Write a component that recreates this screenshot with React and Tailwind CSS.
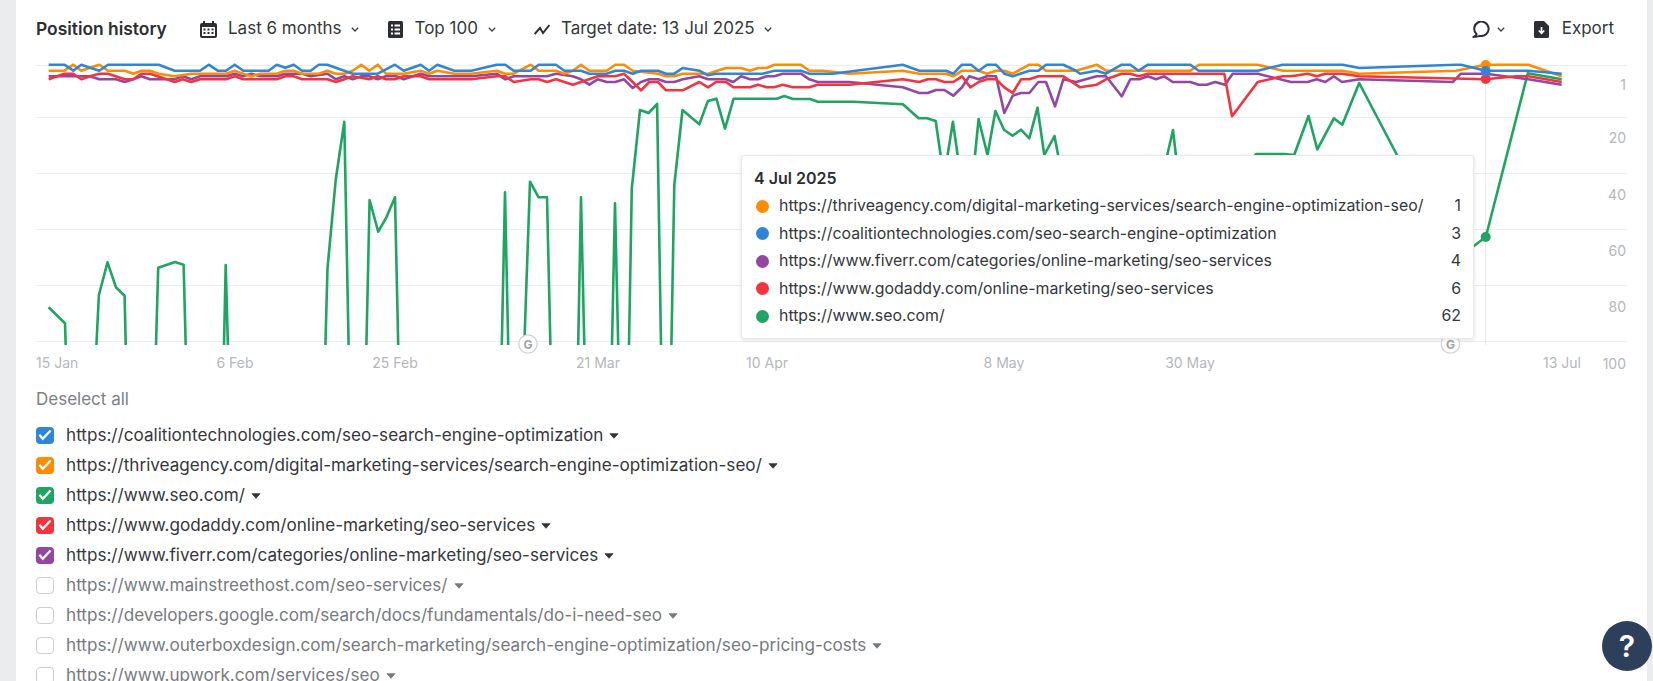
import React from 'react';

const BLUE = '#2f86d9';
const ORANGE = '#ff8b00';
const GREEN = '#1fa463';
const RED = '#f5333f';
const PURPLE = '#9347a3';

// traced from the picture in 3x strips, offset by strip start
const strip = (x0, s) =>
  s.split(' ').map((p) => {
    const [a, b] = p.split(',');
    return `${(x0 + a / 3).toFixed(1)},${(58 + b / 3).toFixed(1)}`;
  }).join(' ');

const topLines = [
  {
    color: PURPLE,
    points: [
      strip(36, '38,55 162,55 190,64 240,64 266,72 292,64 316,55 342,64 416,64 440,55 466,64 492,55 570,55 596,47 622,55 646,47 672,55 722,55 748,47 798,47 824,55 874,47 900,64 925,55 950,64 976,55 1000,55 1025,64 1050,55 1080,55 1103,64 1154,47 1179,55 1306,55 1382,47 1408,64 1433,55 1533,55 1560,47'),
      strip(556, '0,47 50,55 75,64 100,80 125,64 152,72 178,72 204,64 230,90 255,72 280,64 306,64 330,72 355,72 380,64 430,55 456,64 510,64 532,72 555,55 582,64 606,64 632,55 655,55 680,47 735,47 760,64 785,72 880,72 1040,88 1090,105 1115,105 1140,96 1165,96 1192,113 1218,88 1240,55 1268,64 1293,55 1320,55 1345,165 1370,113 1395,105 1420,105 1447,72 1470,72 1497,145 1522,64 1560,72'),
      strip(1076, '0,72 62,55 90,55 137,115 163,64 190,64 215,55 240,64 265,55 290,72 343,72 368,80 392,80 417,72 447,80 470,47 545,47 645,72 695,72 722,64 748,72 773,55 798,72 850,64 1130,72 1155,47 1229,47 1357,64 1457,80'),
    ],
  },
  {
    color: ORANGE,
    points: [
      strip(36, '38,38 85,38 112,20 136,38 162,29 190,20 216,38 266,38 292,47 316,38 342,38 368,47 416,55 466,47 570,47 596,38 622,47 646,55 672,47 722,47 748,38 773,38 798,47 848,47 874,38 900,47 925,47 950,38 976,20 1000,38 1025,20 1050,47 1103,47 1154,38 1179,47 1204,38 1255,47 1306,47 1382,38 1408,47 1433,47 1484,20 1508,38 1560,38'),
      strip(556, '0,38 25,47 50,38 75,20 100,38 152,38 178,20 204,20 230,38 306,47 330,55 355,55 380,47 456,47 510,30 555,30 582,38 606,30 632,30 655,20 735,20 760,38 800,38 880,47 1040,38 1090,47 1170,47 1192,55 1218,38 1268,38 1293,47 1320,38 1345,38 1370,47 1420,20 1447,20 1470,38 1560,38'),
      strip(1076, '0,38 62,20 90,38 343,38 368,20 545,20 620,38 800,38 850,47 1140,38 1229,20 1357,20 1457,55'),
    ],
  },
  {
    color: BLUE,
    points: [
      strip(36, '38,20 85,20 112,38 136,20 162,29 190,38 216,20 368,20 416,38 492,38 518,20 545,38 570,38 596,20 622,38 698,38 722,20 748,29 773,20 798,38 824,38 848,20 874,20 950,47 1025,47 1077,20 1103,38 1154,20 1179,38 1204,20 1255,38 1306,38 1382,20 1408,20 1433,38 1484,38 1508,20 1560,20'),
      strip(556, '0,20 25,38 75,38 100,47 152,47 178,38 204,38 230,47 255,38 306,38 330,47 355,47 380,30 430,38 456,52 480,47 620,47 655,38 735,38 760,47 830,47 1040,20 1090,38 1170,38 1192,47 1218,20 1245,20 1268,38 1293,20 1320,20 1345,47 1370,55 1420,38 1447,38 1470,20 1522,20 1560,38'),
      strip(1076, '0,38 12,47 62,38 90,47 137,20 163,20 188,38 216,20 343,20 368,38 545,38 620,20 800,20 850,30 1140,20 1155,20 1229,38 1357,38 1457,47'),
    ],
  },
  {
    color: RED,
    points: [
      strip(36, '38,64 85,47 112,47 136,64 162,55 190,47 216,47 266,64 292,64 316,47 342,47 392,64 416,72 440,64 466,72 492,64 570,64 596,55 622,64 722,64 748,55 773,55 798,64 874,64 900,72 925,64 950,55 1000,64 1025,55 1050,64 1077,64 1103,55 1154,55 1179,64 1306,64 1382,55 1408,55 1433,72 1484,64 1508,64 1533,72 1560,64'),
      strip(556, '0,64 50,80 75,72 125,55 178,55 204,47 230,72 255,97 280,72 306,72 330,97 380,97 430,72 456,88 480,72 510,72 532,88 582,88 606,80 632,88 655,88 680,80 710,88 760,88 785,80 880,80 1040,64 1090,72 1115,64 1140,64 1165,72 1192,72 1218,55 1243,88 1268,72 1293,64 1320,64 1345,88 1370,105 1395,64 1420,64 1447,55 1522,55 1560,80'),
      strip(1076, '0,80 12,88 62,80 90,64 137,47 163,47 188,55 216,47 445,47 468,175 545,72 620,55 645,55 695,47 722,55 748,47 798,47 850,55 1229,64 1320,55 1357,55 1457,72'),
    ],
  },
];

// seo.com drops out of the top 100 a lot, so it is drawn in pieces
const greenParts = [
  '48.6,307.3 65,323.3 65.7,345',
  '96.4,345 98.9,295 107.5,262.3 116,287.3 124.6,295.7 125.7,345',
  '156,345 158.2,267.7 175,262 183.6,264.7 185.7,345',
  '224,345 225.7,265 227.9,345',
  '325.4,345 327.5,268.3 335.7,180 344.3,121.7 348.6,345',
  '366.4,345 369.6,200 378.2,231.7 386.4,217.3 395,197.3 398.2,345',
  '501.8,345 505,192.3 508.2,345',
  '524.3,345 530,181.7 538.6,197.3 547,197.3 550.4,345',
  '578.2,345 581,197.3 584.3,345',
  '612,345 615,203.3 618.2,345',
  '629,345 631.8,188.3 640,110 648.6,113 657.1,104 661,345',
  '671.4,345 674.3,185 682.5,110 699.3,124.3 707.9,101 716.4,98.7 725,128.7 733.6,98.7 776.8,98.7 784.3,96 792.9,99 810,99 817.9,101.7 853.6,101.7 902.9,104.3 918.6,118.3 927,118.3 935.7,121 942,165 946,165 952.9,121.7 959,165 974,165 978.6,119 987.5,155 995.4,111 1004,129.7 1012.5,135.7 1021,129.7 1029.3,138.3 1037.5,107.7 1044.3,155 1054.5,136 1060,165 1165,165 1173,130 1177,165 1250,165 1256,154 1284,154 1294.2,155 1308.5,116 1317.3,149.3 1333.8,118.3 1342.3,124.7 1359.2,83 1397,155 1440,260 1473.8,246 1485.8,237 1527.8,73.3 1561.7,79.3',
];

const gridY = [65, 117, 173, 229, 285, 341];

const xLabels = [
  ['15 Jan', 36, 'start'],
  ['6 Feb', 235, 'middle'],
  ['25 Feb', 395, 'middle'],
  ['21 Mar', 598, 'middle'],
  ['10 Apr', 767, 'middle'],
  ['8 May', 1004, 'middle'],
  ['30 May', 1190, 'middle'],
  ['13 Jul', 1562, 'middle'],
];

const yLabels = [['1', 84], ['20', 137], ['40', 194], ['60', 250], ['80', 306], ['100', 363]];

const tooltipRows = [
  [ORANGE, 'https://thriveagency.com/digital-marketing-services/search-engine-optimization-seo/', 1],
  [BLUE, 'https://coalitiontechnologies.com/seo-search-engine-optimization', 3],
  [PURPLE, 'https://www.fiverr.com/categories/online-marketing/seo-services', 4],
  [RED, 'https://www.godaddy.com/online-marketing/seo-services', 6],
  [GREEN, 'https://www.seo.com/', 62],
];

const urls = [
  [BLUE, 'https://coalitiontechnologies.com/seo-search-engine-optimization'],
  [ORANGE, 'https://thriveagency.com/digital-marketing-services/search-engine-optimization-seo/'],
  [GREEN, 'https://www.seo.com/'],
  [RED, 'https://www.godaddy.com/online-marketing/seo-services'],
  [PURPLE, 'https://www.fiverr.com/categories/online-marketing/seo-services'],
  [null, 'https://www.mainstreethost.com/seo-services/'],
  [null, 'https://developers.google.com/search/docs/fundamentals/do-i-need-seo'],
  [null, 'https://www.outerboxdesign.com/search-marketing/search-engine-optimization/seo-pricing-costs'],
  [null, 'https://www.upwork.com/services/seo'],
];

function Chevron() {
  return (
    <svg width="8" height="5" viewBox="0 0 8 5" fill="none" className="shrink-0">
      <path d="M0.8 0.8 4 4 7.2 0.8" stroke="#3a3d42" strokeWidth="1.3" />
    </svg>
  );
}

function CalendarIcon() {
  return (
    <svg width="17" height="17" viewBox="0 0 17 17" className="shrink-0">
      <rect x="0" y="2" width="17" height="15" rx="2" fill="#2b2e33" />
      <rect x="3" y="0" width="2" height="4" fill="#2b2e33" />
      <rect x="12" y="0" width="2" height="4" fill="#2b2e33" />
      <rect x="2" y="6" width="13" height="9" fill="#fff" />
      <path d="M3.5 7.5h2v2h-2zM7.5 7.5h2v2h-2zM11.5 7.5h2v2h-2zM3.5 11h2v2h-2zM7.5 11h2v2h-2zM11.5 11h2v2h-2z" fill="#2b2e33" />
    </svg>
  );
}

function TableIcon() {
  return (
    <svg width="15" height="17" viewBox="0 0 15 17" className="shrink-0">
      <rect width="15" height="17" rx="1.5" fill="#2b2e33" />
      <path d="M3 3.5h2v2H3zM3 7.5h2v2H3zM3 11.5h2v2H3zM6.5 3.5H12v2H6.5zM6.5 7.5H12v2H6.5zM6.5 11.5H12v2H6.5z" fill="#fff" />
    </svg>
  );
}

function TrendIcon() {
  return (
    <svg width="16" height="11" viewBox="0 0 16 11" fill="none" className="shrink-0">
      <path d="M0.6 10 6 4 9 9 15.4 1" stroke="#2b2e33" strokeWidth="2" />
    </svg>
  );
}

function CommentIcon() {
  return (
    <svg width="18" height="17" viewBox="0 0 18 17" fill="none" className="shrink-0">
      <path d="M4.6 13.2A7.2 7.2 0 1 1 8 14.9Q4.8 15.9 1.4 16Q3.9 15 4.6 13.2Z" stroke="#2b2e33" strokeWidth="2" strokeLinejoin="round" />
    </svg>
  );
}

function ExportIcon() {
  return (
    <svg width="15" height="17" viewBox="0 0 15 17" className="shrink-0">
      <path d="M1.5 0H10L15 5V15.5A1.5 1.5 0 0 1 13.5 17H1.5A1.5 1.5 0 0 1 0 15.5V1.5A1.5 1.5 0 0 1 1.5 0Z" fill="#2b2e33" />
      <path d="M7.5 6V12M4.8 9.5 7.5 12.3 10.2 9.5" stroke="#fff" strokeWidth="1.7" fill="none" />
    </svg>
  );
}

function Caret({ muted }) {
  const c = muted ? '#767a80' : '#33363b';
  return (
    <svg width="10" height="6" viewBox="0 0 10 6" className="ml-1.5 mt-0.5 shrink-0">
      <path d="M1 0.7H9L5 5.3Z" fill={c} stroke={c} strokeWidth="0.8" strokeLinejoin="round" />
    </svg>
  );
}

function Checkbox({ color }) {
  if (!color) {
    return <span className="h-[17px] w-[18px] shrink-0 rounded-[4px] border border-[#cbcdd1] bg-white" />;
  }
  return (
    <span className="flex h-[17px] w-[18px] shrink-0 items-center justify-center rounded-[4px]" style={{ backgroundColor: color }}>
      <svg width="18" height="17" viewBox="0 0 18 17" fill="none">
        <path d="M3.4 7.8 6.8 11.8 14.6 3.4" stroke="#fff" strokeWidth="2.2" />
      </svg>
    </span>
  );
}

function GBadge({ x }) {
  return (
    <g>
      <circle cx={x} cy="344" r="9.2" fill="#fff" stroke="#d3d4d6" strokeWidth="1.3" />
      <text x={x} y="344.5" textAnchor="middle" dominantBaseline="central" className="fill-[#9fa2a6] text-[12px] font-bold">G</text>
    </g>
  );
}

function Chart() {
  return (
    <svg width="1591" height="316" viewBox="36 56 1591 316" className="block">
      {gridY.map((y) => (
        <line key={y} x1="36" x2="1627" y1={y + 0.5} y2={y + 0.5} stroke="#eceded" strokeWidth="1" />
      ))}
      <line x1="1485.5" x2="1485.5" y1="62" y2="345" stroke="#e9eaec" strokeWidth="1" />
      <g fill="none" strokeWidth="2.6" strokeLinejoin="round">
        {greenParts.map((p, i) => (
          <polyline key={i} points={p} stroke={GREEN} />
        ))}
        {topLines.map((l) => (
          <polyline key={l.color} points={l.points.join(' ')} stroke={l.color} />
        ))}
      </g>
      <GBadge x={527.9} />
      <GBadge x={1450.4} />
      <circle cx="1485.7" cy="65" r="5" fill={ORANGE} />
      <circle cx="1485.7" cy="79" r="5" fill={RED} />
      <circle cx="1485.7" cy="71" r="5" fill={BLUE} />
      <circle cx="1485.7" cy="237" r="5" fill={GREEN} />
      {xLabels.map(([t, x, anchor]) => (
        <text key={t} x={x} y="362" textAnchor={anchor} dominantBaseline="central" className="fill-[#b4b7bb] text-[14px]">{t}</text>
      ))}
      {yLabels.map(([t, y]) => (
        <text key={t} x="1626" y={y} textAnchor="end" dominantBaseline="central" className="fill-[#b4b7bb] text-[14px]">{t}</text>
      ))}
    </svg>
  );
}

function Tooltip() {
  return (
    <div className="absolute left-[705px] top-[98.5px] h-[184.5px] w-[733px] rounded-[3px] border border-[#e8e9ea] bg-white px-3 pt-[10.5px] text-[15.86px] text-[#34373c] shadow-[0_1px_4px_rgba(0,0,0,0.12)]">
      <div className="mb-[2.5px] h-[24px] text-[16px] font-semibold leading-[24px] text-[#2b2e33]">4 Jul 2025</div>
      {tooltipRows.map(([color, url, pos]) => (
        <div key={url} className="flex h-[27.5px] items-center">
          <span className="ml-[2px] mr-[10px] h-[13px] w-[13px] shrink-0 rounded-full" style={{ backgroundColor: color }} />
          <span className="flex-1">{url}</span>
          <span>{pos}</span>
        </div>
      ))}
    </div>
  );
}

export default function App() {
  return (
    <div className="relative h-[681px] overflow-hidden bg-[#ebecee] pl-4 pr-1.5 font-['Inter',sans-serif]">
      <div className="h-full bg-white px-5">
        <div className="flex h-14 items-center pt-[2px] text-[17px] text-[#34373c]">
          <h2 className="mr-[34px] w-[130px] whitespace-nowrap text-[17.4px] font-semibold text-[#2b2e33]">Position history</h2>
          <div className="mr-[29px] flex items-center">
            <CalendarIcon />
            <span className="ml-[11px] mr-[9px]">Last 6 months</span>
            <Chevron />
          </div>
          <div className="mr-[38px] flex items-center">
            <TableIcon />
            <span className="ml-[12px] mr-[10px]">Top 100</span>
            <Chevron />
          </div>
          <div className="flex items-center">
            <TrendIcon />
            <span className="ml-[11px] mr-[9px]">Target date: 13 Jul 2025</span>
            <Chevron />
          </div>
          <div className="ml-auto mr-[13px] flex items-center">
            <CommentIcon />
            <span className="ml-[7px] mr-[29px]"><Chevron /></span>
            <ExportIcon />
            <span className="ml-[13px]">Export</span>
          </div>
        </div>

        <div className="relative">
          <Chart />
          <Tooltip />
        </div>

        <div className="pt-[16px] text-[17px] leading-[22px] text-[#7b7f86]">Deselect all</div>

        <div className="mt-[10px] flex flex-col">
          {urls.map(([color, url]) => (
            <div key={url} className={`flex h-[30px] shrink-0 items-center ${color ? 'text-[#34373c]' : 'text-[#767a80]'}`}>
              <Checkbox color={color} />
              <span className="ml-[12px] text-[17.14px]">{url}</span>
              <Caret muted={!color} />
            </div>
          ))}
        </div>
      </div>

      <div className="absolute left-[1602px] top-[621px] flex h-[50px] w-[50px] items-center justify-center rounded-full bg-[#2e3f5c] text-[30px] font-semibold text-white">?</div>
    </div>
  );
}
